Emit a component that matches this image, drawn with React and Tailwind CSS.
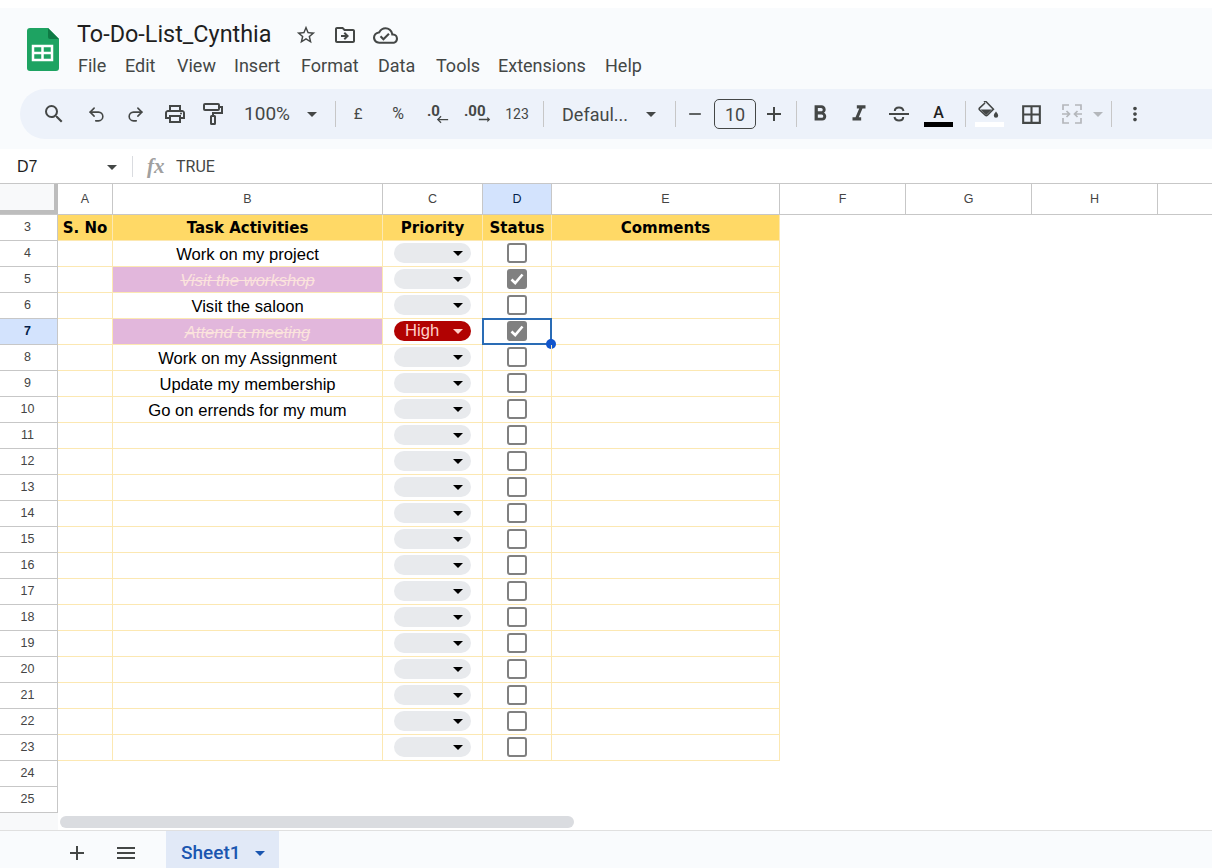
import {
  MdSearch,
  MdOutlinePrint,
  MdArrowDropDown,
  MdAdd,
  MdRemove,
  MdFormatBold,
  MdFormatItalic,
  MdBorderAll,
  MdMoreVert,
  MdMenu,
  MdStarBorder,
  MdOutlineDriveFileMove,
  MdOutlineCloudDone,
  MdArrowRightAlt,
  MdKeyboardBackspace,
} from "react-icons/md";
import { Undo2, Redo2 } from "lucide-react";

const taskRows = [
  { num: 4, task: "Work on my project" },
  { num: 5, task: "Visit the workshop", done: true },
  { num: 6, task: "Visit the saloon" },
  { num: 7, task: "Attend a meeting", done: true, priority: "High", selected: true },
  { num: 8, task: "Work on my Assignment" },
  { num: 9, task: "Update my membership" },
  { num: 10, task: "Go on errends for my mum" },
  ...[11, 12, 13, 14, 15, 16, 17, 18, 19, 20, 21, 22, 23].map((num) => ({ num, task: "" })),
];

const menuItems = [
  { label: "File", cls: "w-[47px]" },
  { label: "Edit", cls: "w-[52px]" },
  { label: "View", cls: "w-[57px]" },
  { label: "Insert", cls: "w-[67px]" },
  { label: "Format", cls: "w-[77px]" },
  { label: "Data", cls: "w-[58px]" },
  { label: "Tools", cls: "w-[62px]" },
  { label: "Extensions", cls: "w-[107px]" },
  { label: "Help", cls: "w-[40px]" },
];

function Sep({ cls }) {
  return <div className={`w-px h-[26px] bg-[#c7c7c7] shrink-0 ${cls}`} />;
}

function Tool({ cls, children }) {
  return (
    <div className={`flex items-center justify-center shrink-0 text-[#444746] ${cls}`}>
      {children}
    </div>
  );
}

function SheetsLogo() {
  return (
    <svg width="32" height="43" viewBox="0 0 32 43" className="shrink-0">
      <path d="M3 0H21L32 11V40a3 3 0 0 1-3 3H3a3 3 0 0 1-3-3V3a3 3 0 0 1 3-3Z" fill="#1ea362" />
      <path d="M21 0L32 11H23a2 2 0 0 1-2-2Z" fill="#0f7a45" />
      <path d="M6 18H25V32H6Z" fill="none" stroke="#fff" strokeWidth="2.5" />
      <path d="M6 25H25M15.5 18V32" stroke="#fff" strokeWidth="2.5" />
    </svg>
  );
}

function RollerIcon() {
  return (
    <svg width="20" height="22" viewBox="0 0 20 22" fill="none" stroke="#444746" strokeWidth="2">
      <rect x="1" y="1" width="15" height="6" rx="1" />
      <path d="M16 4h3v6h-9v3" />
      <rect x="8" y="13" width="4" height="8" rx="0.5" />
    </svg>
  );
}

function StrikeIcon() {
  return (
    <svg width="22" height="20" viewBox="0 0 22 20" fill="none" stroke="#444746" strokeWidth="2">
      <path d="M1 10H21" />
      <path d="M15.5 7C15 4.5 13 3.5 11 3.5S6.8 4.6 6.8 7" />
      <path d="M6.5 13C7 15.5 9 16.5 11 16.5S15.2 15.4 15.2 13" />
    </svg>
  );
}

function FillIcon() {
  return (
    <svg width="22" height="19" viewBox="0 0 22 19">
      <path d="M6 1l1.4-1 8 8.2-6 6a1.5 1.5 0 0 1-2.1 0L1.7 9a1.5 1.5 0 0 1 0-2.1L7 2" fill="none" stroke="#444746" strokeWidth="1.6" />
      <path d="M2.5 8.5H14L8.3 14Z" fill="#444746" />
      <path d="M18 10.5s2.2 2.6 2.2 4a2.2 2.2 0 0 1-4.4 0c0-1.4 2.2-4 2.2-4Z" fill="#444746" />
    </svg>
  );
}

function MergeIcon() {
  return (
    <svg width="20" height="20" viewBox="0 0 20 20" fill="none" stroke="#b4b7bb" strokeWidth="1.7">
      <path d="M7 1H1V6M1 14V19H7M13 1H19V6M19 14V19H13" />
      <path d="M0 10H7M4.5 7L7.5 10L4.5 13M20 10H13M15.5 7L12.5 10L15.5 13" />
    </svg>
  );
}

function Chip({ label }) {
  if (label) {
    return (
      <div className="w-[77px] h-5 rounded-full bg-[#b10202] text-[#ffcfc9] flex items-center justify-between pl-[11px] pr-[6px]">
        <span className="pt-px">{label}</span>
        <span className="w-0 h-0 border-x-[5px] border-x-transparent border-t-[5px] border-t-[#ffcfc9] mr-[2px]" />
      </div>
    );
  }
  return (
    <div className="w-[77px] h-5 rounded-full bg-[#e8eaed] flex items-center justify-end pr-[8px]">
      <span className="w-0 h-0 border-x-[5px] border-x-transparent border-t-[5px] border-t-black" />
    </div>
  );
}

function Checkbox({ checked }) {
  if (checked) {
    return (
      <div className="w-5 h-5 rounded-[3px] bg-[#808080] flex items-center justify-center">
        <svg width="16" height="16" viewBox="0 0 16 16" fill="none" stroke="#fff" strokeWidth="2.6">
          <path d="M2.5 8.5L6.2 12L13.5 3.5" />
        </svg>
      </div>
    );
  }
  return <div className="w-5 h-5 rounded-[3px] border-2 border-[#808080] bg-white" />;
}

function RowNum({ num, active }) {
  return (
    <div
      className={`w-[58px] shrink-0 h-full flex items-center justify-center border-r border-b border-r-[#c7c7c7] border-b-[#c7c7c7] text-[12.5px] pr-[2px] pb-px font-['Liberation_Sans',sans-serif] ${
        active ? "bg-[#d3e3fd] font-bold text-[#041e49]" : "font-normal text-[#444]"
      }`}
    >
      {num}
    </div>
  );
}

function TaskRow({ row }) {
  const cell = "h-full shrink-0 border-r border-b border-[#fce8b2] flex items-center justify-center";
  return (
    <div className="flex h-[26px] text-[16.6px] text-black">
      <RowNum num={row.num} active={row.selected} />
      <div className={`${cell} w-[55px]`} />
      <div
        className={`${cell} w-[270px] pt-[3px] ${
          row.done ? "bg-[#e2b7dc] text-[#fbe3dd] italic line-through" : ""
        }`}
      >
        {row.task}
      </div>
      <div className={`${cell} w-[100px] pb-px`}>
        <Chip label={row.priority} />
      </div>
      <div className={`${cell} w-[69px] pb-px relative`}>
        <Checkbox checked={row.done} />
        {row.selected && (
          <>
            <div className="absolute -left-px -top-px -right-px -bottom-px border-2 border-[#2a6cb5]" />
            <div className="absolute -right-[5px] -bottom-[5px] w-[10px] h-[10px] rounded-full bg-[#1155cc]" />
          </>
        )}
      </div>
      <div className={`${cell} w-[228px]`} />
    </div>
  );
}

function App() {
  const colHead = "h-full shrink-0 flex items-center justify-center border-r border-[#c7c7c7] pt-px";
  const headCell = "h-full shrink-0 flex items-center justify-center border-r border-b border-[#fce8b2] bg-[#ffd966] pt-px";

  return (
    <div className="w-[1212px] h-[868px] overflow-hidden flex flex-col bg-white font-['Liberation_Sans',sans-serif]">
      <div className="h-2 shrink-0 bg-white" />

      {/* title and menu */}
      <div className="h-[141px] shrink-0 bg-[#f9fbfd] flex flex-col font-['Roboto',sans-serif]">
        <div className="flex h-[81px] pl-[27px] pt-[20px]">
          <SheetsLogo />
          <div className="ml-[18px] -mt-[9px]">
            <div className="flex items-center h-[32px] text-[#1f1f1f]">
              <span className="text-[23.4px] w-[218px]">To-Do-List_Cynthia</span>
              <MdStarBorder size={22} className="text-[#444746]" />
              <MdOutlineDriveFileMove size={24} className="ml-[16px] text-[#444746]" />
              <MdOutlineCloudDone size={25} className="ml-[16px] text-[#444746]" />
            </div>
            <div className="flex items-center h-[29px] pl-px text-[18px] text-[#444746]">
              {menuItems.map((m) => (
                <span key={m.label} className={m.cls}>
                  {m.label}
                </span>
              ))}
            </div>
          </div>
        </div>

        {/* toolbar */}
        <div className="ml-5 h-[50px] bg-[#edf2fa] rounded-l-full flex items-center pl-[14px] text-[#444746]">
          <Tool cls="w-[40px]"><MdSearch size={24} /></Tool>
          <Tool cls="w-[44px]"><Undo2 size={19} strokeWidth={2} /></Tool>
          <Tool cls="w-[34px]"><Redo2 size={19} strokeWidth={2} /></Tool>
          <Tool cls="w-[46px]"><MdOutlinePrint size={24} /></Tool>
          <Tool cls="w-[30px]"><RollerIcon /></Tool>
          <Tool cls="w-[62px] text-[19px] justify-end">100%</Tool>
          <Tool cls="w-[34px] justify-end"><MdArrowDropDown size={24} /></Tool>
          <Sep cls="ml-[11px]" />
          <Tool cls="w-[44px] text-[15px]">£</Tool>
          <Tool cls="w-[36px] text-[16px]">%</Tool>
          <Tool cls="w-[42px] relative h-[26px]">
            <span className="absolute left-[11px] -top-[1px] font-bold text-[15px]">.0</span>
            <MdKeyboardBackspace size={15} className="absolute right-[8px] bottom-[0px]" />
          </Tool>
          <Tool cls="w-[38px] relative h-[26px]">
            <span className="absolute left-[6px] -top-[1px] font-bold text-[15px]">.00</span>
            <MdArrowRightAlt size={17} className="absolute right-[3px] -bottom-[1px]" />
          </Tool>
          <Tool cls="w-[42px] text-[14px]">123</Tool>
          <Sep cls="ml-[5px]" />
          <Tool cls="w-[84px] text-[18px] justify-end">Defaul...</Tool>
          <Tool cls="w-[35px] justify-end"><MdArrowDropDown size={24} /></Tool>
          <Sep cls="ml-[12px]" />
          <Tool cls="w-[37px]"><MdRemove size={20} /></Tool>
          <Tool cls="w-[42px] ml-px h-[30px] border border-[#444746] rounded-[5px] text-[18px]">10</Tool>
          <Tool cls="w-[36px]"><MdAdd size={24} /></Tool>
          <Sep cls="ml-[4px]" />
          <Tool cls="w-[45px]"><MdFormatBold size={26} /></Tool>
          <Tool cls="w-[33px]"><MdFormatItalic size={26} /></Tool>
          <Tool cls="w-[47px]"><StrikeIcon /></Tool>
          <div className="w-[33px] shrink-0 flex flex-col items-center mt-[1px]">
            <span className="text-[16px] leading-[19px] text-[#1f1f1f] font-medium">A</span>
            <div className="w-[29px] h-[5px] bg-black" />
          </div>
          <Sep cls="ml-[10px]" />
          <div className="w-[46px] shrink-0 flex flex-col items-center">
            <FillIcon />
            <div className="w-[29px] h-[5px] bg-white mt-[2px]" />
          </div>
          <Tool cls="w-[38px]"><MdBorderAll size={25} /></Tool>
          <Tool cls="w-[44px]"><MergeIcon /></Tool>
          <Tool cls="w-[8px] text-[#b4b7bb]">
            <MdArrowDropDown size={24} className="shrink-0 text-[#b4b7bb]" />
          </Tool>
          <Sep cls="ml-[9px]" />
          <Tool cls="w-[46px]"><MdMoreVert size={22} /></Tool>
        </div>
      </div>

      {/* formula bar */}
      <div className="h-[35px] shrink-0 flex items-center border-b border-[#c7c7c7] text-[#444746] text-[16px] pt-px">
        <span className="w-[100px] pl-[17px] text-[#1f1f1f]">D7</span>
        <MdArrowDropDown size={24} />
        <div className="w-px h-[21px] bg-[#dadce0] ml-[8px]" />
        <span className="w-[43px] pl-[14px] font-['Liberation_Serif',serif] italic font-semibold text-[21px] text-[#a0a0a0]">fx</span>
        <span className="font-['Roboto',sans-serif]">TRUE</span>
      </div>

      {/* column letters */}
      <div className="h-[31px] shrink-0 flex border-b border-[#c7c7c7] text-[12.5px] text-[#444]">
        <div className="w-[58px] shrink-0 h-full bg-[#f8f9fa] border-r-[4px] border-b-[4px] border-[#bdbdbd]" />
        <div className={`${colHead} w-[55px]`}>A</div>
        <div className={`${colHead} w-[270px]`}>B</div>
        <div className={`${colHead} w-[100px]`}>C</div>
        <div className={`${colHead} w-[69px] bg-[#d3e3fd] text-[#041e49]`}>D</div>
        <div className={`${colHead} w-[228px]`}>E</div>
        <div className={`${colHead} w-[126px]`}>F</div>
        <div className={`${colHead} w-[126px]`}>G</div>
        <div className={`${colHead} w-[126px]`}>H</div>
      </div>

      {/* grid */}
      <div className="h-[26px] shrink-0 flex text-[15px] text-black font-bold font-['DejaVu_Sans',sans-serif]">
        <RowNum num={3} />
        <div className={`${headCell} w-[55px]`}>S. No</div>
        <div className={`${headCell} w-[270px]`}>Task Activities</div>
        <div className={`${headCell} w-[100px]`}>Priority</div>
        <div className={`${headCell} w-[69px]`}>Status</div>
        <div className={`${headCell} w-[228px]`}>Comments</div>
      </div>
      {taskRows.map((row) => (
        <TaskRow key={row.num} row={row} />
      ))}
      <div className="h-[26px] shrink-0 flex"><RowNum num={24} /></div>
      <div className="h-[26px] shrink-0 flex"><RowNum num={25} /></div>

      {/* scrollbar */}
      <div className="h-[18px] shrink-0 flex items-center border-b border-[#e0e0e0]">
        <div className="w-[58px] h-full bg-[#f8f9fa]" />
        <div className="ml-[2px] w-[514px] h-3 rounded-full bg-[#dadce0]" />
      </div>

      {/* sheet tabs */}
      <div className="flex-1 flex items-stretch bg-[#f9fbfd] text-[#444746]">
        <div className="w-[153px] flex items-center pl-[65px] pt-[7px]">
          <MdAdd size={24} />
          <MdMenu size={24} className="ml-[25px]" />
        </div>
        <div className="ml-[13px] w-[113px] bg-[#e1e9f7] text-[#1a56b0] flex items-center pl-[15px] pt-[7px] text-[19px] font-medium font-['Roboto',sans-serif]">
          Sheet1
          <MdArrowDropDown size={24} className="ml-[7px]" />
        </div>
      </div>
    </div>
  );
}

export default App;
